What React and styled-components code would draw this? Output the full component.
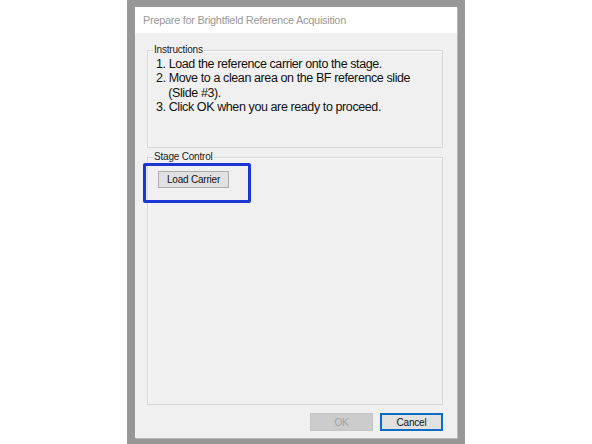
import React from "react";
import styled, { createGlobalStyle } from "styled-components";

const Global = createGlobalStyle`
  html, body { margin: 0; padding: 0; background: #ffffff; }
  body { width: 592px; height: 444px; overflow: hidden; font-family: "Liberation Sans", Arial, sans-serif; }
`;

const Page = styled.div`
  width: 592px;
  height: 444px;
  display: flex;
  justify-content: center;
`;

const Frame = styled.div`
  width: 338px;
  height: 444px;
  box-sizing: border-box;
  background: #979797;
  padding: 7px 8px 6px 8px;
  display: flex;
`;

const Dialog = styled.div`
  flex: 1;
  display: flex;
  flex-direction: column;
  background: #f0f0f0;
  box-shadow: 1px 1px 0 #b8b8b8;
`;

const TitleBar = styled.div`
  height: 26px;
  background: #ffffff;
  display: flex;
  align-items: center;
  padding-left: 8px;
  font-size: 11px;
  letter-spacing: -0.3px;
  color: #9a9a9a;
`;

const Body = styled.div`
  flex: 1;
  display: flex;
  flex-direction: column;
  padding: 11px 14px 7px 12px;
`;

const Group = styled.fieldset`
  margin: 0;
  padding: 0;
  border: 1px solid #d6d6d6;
  box-shadow: inset 1px 1px 0 #fafafa;
  position: relative;
  min-width: 0;
  ${(p) => (p.$grow ? "flex: 1; margin-top: 3px;" : "")}
  ${(p) => (p.$height ? `height: ${p.$height}px;` : "")}
  box-sizing: border-box;
`;

const Legend = styled.legend`
  font-size: 10px;
  line-height: 12px;
  letter-spacing: -0.2px;
  color: #1a1a1a;
  padding: 0 1px;
  margin-left: 5px;
`;

const Steps = styled.div`
  font-size: 12.5px;
  line-height: 14.4px;
  letter-spacing: -0.4px;
  color: #111;
  white-space: pre;
  padding: 1px 0 0 8px;
`;

const Button = styled.button`
  font-family: "Liberation Sans", Arial, sans-serif;
  font-size: 10px;
  letter-spacing: -0.2px;
  width: ${(p) => p.$w}px;
  height: ${(p) => p.$h || 18}px;
  box-sizing: border-box;
  padding: 0;
  background: ${(p) => (p.$disabled ? "#cccccc" : "#e1e1e1")};
  color: ${(p) => (p.$disabled ? "#a3a3a3" : "#111")};
  border: 1px solid ${(p) => (p.$default ? "#0a6bc8" : p.$disabled ? "#c4c4c4" : "#adadad")};
  ${(p) => (p.$default ? "box-shadow: inset 0 0 0 1px #0a6bc8;" : "")}
`;

const StageInner = styled.div`
  padding: 6px 0 0 10px;
`;

const Highlight = styled.div`
  position: absolute;
  left: -5px;
  top: 0px;
  width: 108px;
  height: 40px;
  box-sizing: border-box;
  border: 3px solid #1c36d4;
  border-radius: 2px;
  pointer-events: none;
`;

const Footer = styled.div`
  display: flex;
  justify-content: flex-end;
  gap: 7px;
  margin-top: 8px;
`;

export default function App() {
  return (
    <Page>
      <Global />
      <Frame>
        <Dialog>
          <TitleBar>Prepare for Brightfield Reference Acquisition</TitleBar>
          <Body>
            <Group $height={104}>
              <Legend>Instructions</Legend>
              <Steps>
                {"1. Load the reference carrier onto the stage.\n2. Move to a clean area on the BF reference slide\n    (Slide #3).\n3. Click OK when you are ready to proceed."}
              </Steps>
            </Group>
            <Group $grow>
              <Legend>Stage Control</Legend>
              <StageInner>
                <Button $w={71} $h={17}>Load Carrier</Button>
              </StageInner>
              <Highlight />
            </Group>
            <Footer>
              <Button $w={63} $disabled>OK</Button>
              <Button $w={63} $default>Cancel</Button>
            </Footer>
          </Body>
        </Dialog>
      </Frame>
    </Page>
  );
}
